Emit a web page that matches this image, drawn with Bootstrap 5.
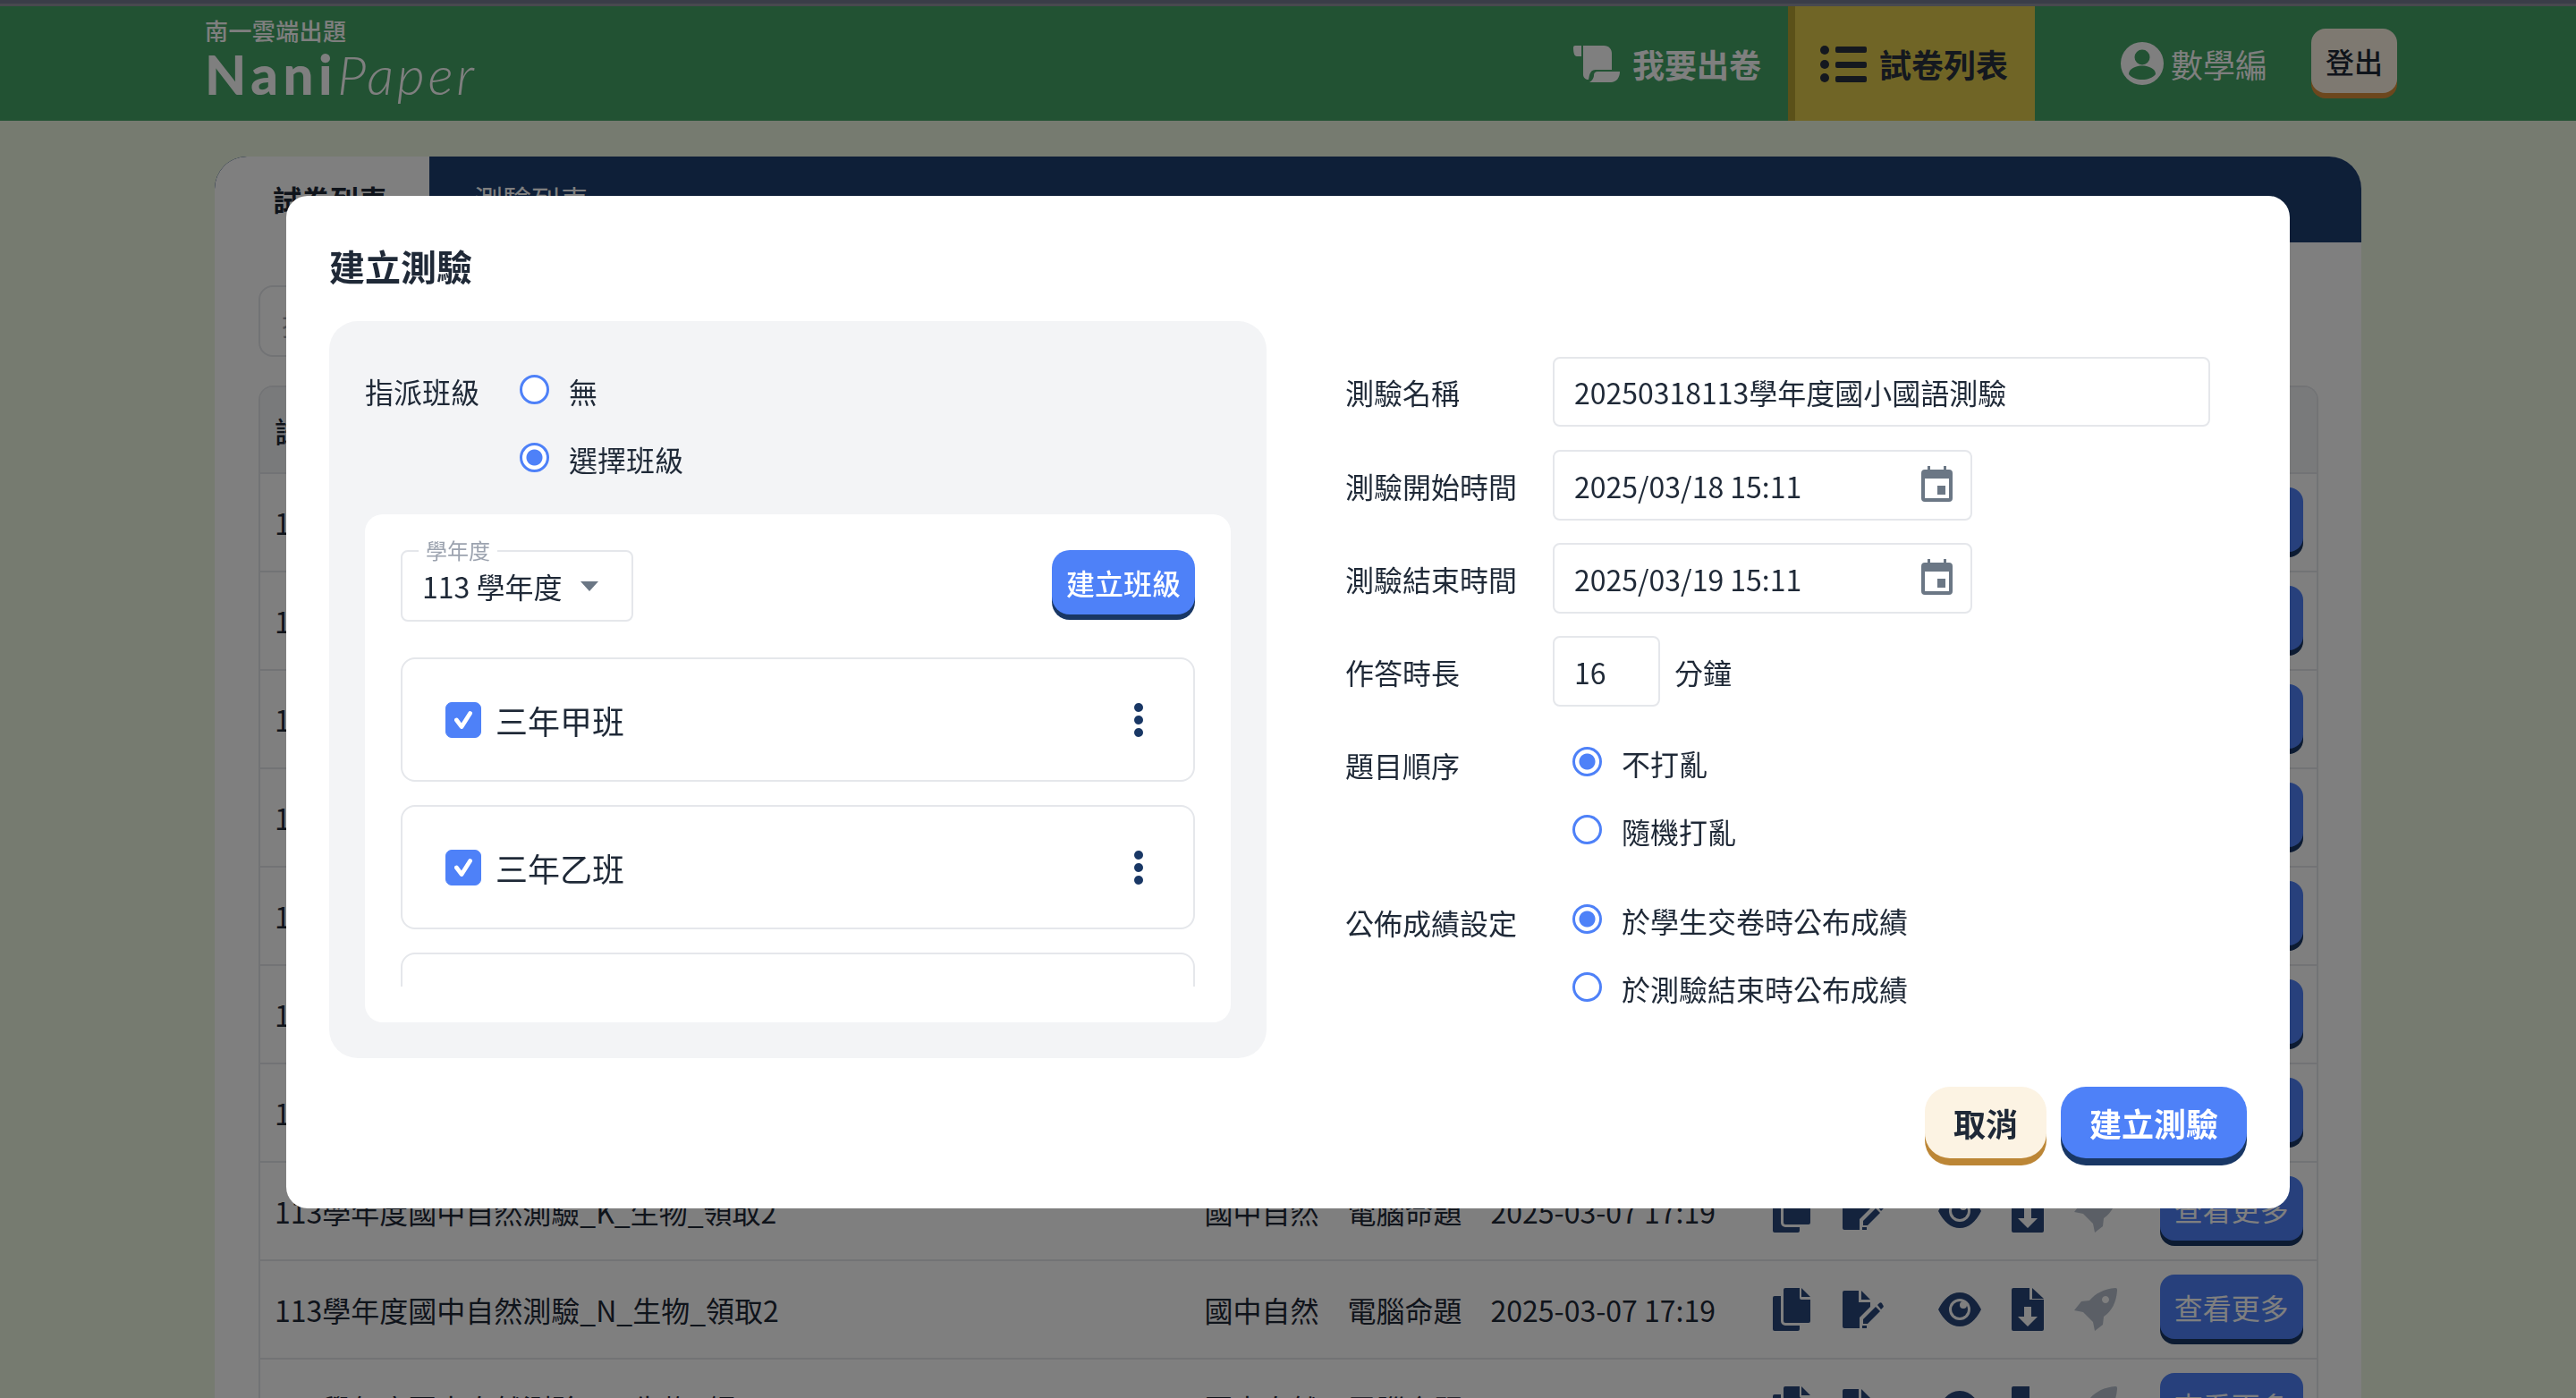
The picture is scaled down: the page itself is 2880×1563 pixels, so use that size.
<!DOCTYPE html>
<html lang="zh-Hant">
<head>
<meta charset="utf-8">
<title>NaniPaper</title>
<link href="https://cdn.jsdelivr.net/npm/bootstrap@5.3.0/dist/css/bootstrap.min.css" rel="stylesheet">
<style>
html,body{height:100%}
body{font-family:"Noto Sans CJK TC","Noto Sans",sans-serif;font-size:32px;color:#1f2937;background:#ecf6e0;line-height:1.5}
.top-strip{height:7px;background:#747a90;border-bottom:3px solid #90929e}
.app-nav{height:128px;background:#44a466;padding:0 200px 0 229px;flex-wrap:nowrap}
.logo-sub{font-size:26px;font-weight:500;color:#fff;letter-spacing:.4px;line-height:24px;margin-top:-6px}
.logo-main{font-family:Lato,sans-serif;font-size:60px;color:#fff;line-height:62px;white-space:nowrap;margin-top:6px}
.logo-main b{font-weight:900;letter-spacing:5.5px}
.logo-main i{font-weight:300;letter-spacing:3.6px}
.nav-item-a{display:flex;align-items:center;height:128px;font-size:36px;font-weight:700;color:#fff;text-decoration:none;gap:14px}
.nav-item-a svg{display:block}
.item-write{padding-right:30px}
.item-list{background:#e0ca4c;border-left:8px solid #b6a233;padding:0 30px 0 28px;color:#29303e}
.item-user{margin-left:96px;gap:8px;font-weight:400}
.logout{width:96px;height:72px;margin:0 0 6px 49px;padding:0;background:#fcf3e3;color:#1f2937;border:0;border-radius:16px;font-size:32px;font-weight:500;box-shadow:0 6px 0 #d98f3a}
.paper-card{margin:40px 240px 0;background:#fff;border-radius:36px 36px 0 0;overflow:hidden}
.tab-row{height:96px;background:#1c3e70}
.tab-a{width:240px;padding:23px 0 0 65px;background:#fff;font-weight:700;color:#1f2937;border-radius:36px 0 0 0}
.tab-b{padding:23px 0 0 50px;color:#fff}
.paper-body{padding:48px 48px 0 49px}
.search-box{width:800px;height:80px;border:2px solid #e5e7eb;border-radius:16px;padding:16px 24px;margin-bottom:32px;color:#9ca3af}
.table-wrap{border:2px solid #e5e7eb;border-bottom:0;border-radius:16px 16px 0 0;overflow:hidden}
.paper-table{table-layout:fixed;margin:0;width:100%;--bs-table-color:#1f2937}
.paper-table th{height:96px;background:#f3f4f6;font-weight:500;padding:0 0 0 16px;vertical-align:middle;border-bottom:2px solid #e5e7eb}
.paper-table td{height:110px;padding:0 0 0 18px;vertical-align:middle;border-bottom:2px solid #e5e7eb;white-space:nowrap}
.paper-table td:first-child{padding-left:16px}
.w-a{width:1037px}.w-b{width:160px}.w-c{width:160px}.w-d{width:316px}.w-e{width:625px}
.tool-set{display:flex;align-items:center;gap:28px;margin-left:-4px;color:#28467a}
.tool-set svg{display:block;flex:none}
.gap-x{margin-left:3px}.gap-y{margin-left:33px}
.tool-off{color:#b6bfcc}
.more-btn{display:block;width:160px;height:72px;padding:0;margin:-6px 0 0 48px;background:#4e81f8;color:#fff;border:0;border-radius:16px;font-size:32px;box-shadow:0 6px 0 #193765}
.more-push{margin-left:432px}
.dialog-box{max-width:2240px;width:2240px;margin:219px auto 0}
.dialog-box .modal-content{border:0;border-radius:24px;height:1132px;padding:0 48px 48px;display:block;color:#1f2937}
.dlg-title{font-size:40px;font-weight:700;height:140px;padding-top:48px;line-height:60px;margin:0}
.left-panel{width:1048px;height:824px;background:#f3f4f6;border-radius:32px;padding:40px}
.assign-row{height:76px}
.assign-row .rad,.rad-line .rad{margin-top:-3px}
.assign-label{width:173px}
.white-box{height:568px;margin-top:24px;background:#fff;border-radius:20px;padding:40px}
.year-sel{position:relative;width:260px;height:80px;border:2px solid #e5e7eb;border-radius:8px;padding:0 22px;font-size:32px}
.year-label{position:absolute;top:-14px;left:18px;background:#fff;padding:0 8px;font-size:24px;line-height:24px;color:#9ca3af}
.caret-mark{width:0;height:0;border:10px solid transparent;border-top:11px solid #6b7785;border-bottom:0;margin-left:auto;margin-right:15px}
.class-btn{width:160px;height:72px;padding:0;background:#4e81f8;color:#fff;border:0;border-radius:20px;font-size:32px;font-weight:500;box-shadow:0 6px 0 #193765;margin-bottom:6px}
.class-list{height:368px;margin-top:40px;overflow:hidden}
.class-item{height:139px;margin-bottom:26px;border:2px solid #e5e7eb;border-radius:16px;padding:0 56px 0 48px;font-size:36px}
.form-check-input.chk{width:40px;height:40px;margin:0 16px 0 0;border-radius:7px;background-color:#4e81f8;border-color:#4e81f8;flex:none}
.form-check-input.chk:checked{--bs-form-check-bg-image:url("data:image/svg+xml,%3csvg xmlns='http://www.w3.org/2000/svg' viewBox='0 0 20 20'%3e%3cpath fill='none' stroke='%23fff' stroke-linecap='round' stroke-linejoin='round' stroke-width='2.5' d='M6 10l3 4 5-8'/%3e%3c/svg%3e")}
.form-check-input.rad{width:33px;height:33px;margin-bottom:0;margin-right:0;margin-left:0;border:3px solid #4e81f8;background-color:#fff;flex:none}
.form-check-input.rad:checked{background-color:#fff;background-image:radial-gradient(circle,#4e81f8 0 8.5px,#fff 9.5px)}
.rad-text{margin-left:22px}
.dots-mark{display:flex;flex-direction:column;gap:4px;margin-left:auto}
.dots-mark span{width:10px;height:10px;border-radius:50%;background:#193765}
.right-panel{width:968px;margin-left:88px;padding-top:40px}
.form-line{margin-bottom:25px}
.form-line-first{margin-bottom:26px}
.form-name{width:232px;flex:none}
.paper-input{height:79px;font-size:32px;color:#1f2937;border:2px solid #e5e7eb;border-radius:8px;padding:0 22px;box-shadow:none}
.w-full{width:735px;height:78px}.w-num{width:120px}
.time-box{display:flex;align-items:center;height:79px;width:469px;border:2px solid #e5e7eb;border-radius:8px;padding:0 20px 0 22px}
.time-box span{flex:1}
.time-box svg{margin-top:-4px}
.unit-text{margin-left:16px}
.rad-line{height:76px;padding-left:22px}
.rad-text-b{margin-left:22px}
.foot-row{margin-top:32px;gap:16px}
.foot-btn{height:80px;padding:0;border:0;border-radius:28px;font-size:36px;font-weight:700;margin-bottom:8px}
.foot-cancel{width:136px;background:#fcf3e3;color:#1f2937;box-shadow:0 8px 0 #bc8636}
.foot-create{width:208px;background:#4e81f8;color:#fff;box-shadow:0 8px 0 #193765}
</style>
</head>
<body class="overflow-hidden">
<div class="top-strip"></div>
<nav class="navbar app-nav">
  <div>
    <div class="logo-sub">南一雲端出題</div>
    <div class="logo-main"><b>Nani</b><i>Paper</i></div>
  </div>
  <div class="d-flex align-items-center ms-auto">
    <a class="nav-item-a item-write" href="#">
      <svg width="52" height="41" viewBox="0 0 52 41" fill="#fff"><path d="M0 2a2 2 0 0 1 2-2H9V12H4C1 12 0 8 0 2z"/><path d="M11 0H34C40 0 43 4 43 9V27H26C20 27 19 30 18 33L17 38C14 38 11 36 11 32z"/><path d="M27 29H52C52 36 48 41 42 41H18C22 39 23 35 23 33C23 30 25 29 27 29z"/></svg>
      我要出卷</a>
    <a class="nav-item-a item-list" href="#">
      <svg width="52" height="41" viewBox="0 0 52 41" fill="#29303e"><circle cx="5" cy="5" r="5"/><circle cx="5" cy="21" r="5"/><circle cx="5" cy="36" r="5"/><rect x="17" y="1" width="35" height="7" rx="2"/><rect x="17" y="18" width="35" height="7" rx="2"/><rect x="17" y="34" width="35" height="7" rx="2"/></svg>
      試卷列表</a>
    <a class="nav-item-a item-user" href="#">
      <svg width="48" height="48" viewBox="0 0 48 48"><circle cx="24" cy="24" r="24" fill="#fff"/><circle cx="24" cy="17" r="8.5" fill="#44a466"/><path d="M9 36c0-7 9-9.500 15-9.500S39 29 39 36c-3.500 4-9 6-15 6s-11.500-2-15-6z" fill="#44a466"/></svg>
      數學編</a>
    <button class="logout" type="button">登出</button>
  </div>
</nav>

<div class="paper-card">
  <div class="tab-row d-flex">
    <div class="tab-a">試卷列表</div>
    <div class="tab-b">測驗列表</div>
  </div>
  <div class="paper-body">
    <div class="search-box">搜尋試卷名稱</div>
    <div class="table-wrap">
      <table class="table paper-table">
        <thead><tr><th class="w-a">試卷名稱</th><th class="w-b">科目</th><th class="w-c">類型</th><th class="w-d">建立時間</th><th class="w-e">操作</th></tr></thead>
        <tbody>
          <tr><td>113學年度國中自然測驗_A_生物_領取2</td><td>國中自然</td><td>電腦命題</td><td>2025-03-07 17:19</td><td><div class="d-flex align-items-center"><button class="more-btn more-push" type="button">查看更多</button></div></td></tr>
          <tr><td>113學年度國中自然測驗_B_生物_領取2</td><td>國中自然</td><td>電腦命題</td><td>2025-03-07 17:19</td><td><div class="d-flex align-items-center"><button class="more-btn more-push" type="button">查看更多</button></div></td></tr>
          <tr><td>113學年度國中自然測驗_C_生物_領取2</td><td>國中自然</td><td>電腦命題</td><td>2025-03-07 17:19</td><td><div class="d-flex align-items-center"><button class="more-btn more-push" type="button">查看更多</button></div></td></tr>
          <tr><td>113學年度國中自然測驗_D_生物_領取2</td><td>國中自然</td><td>電腦命題</td><td>2025-03-07 17:19</td><td><div class="d-flex align-items-center"><button class="more-btn more-push" type="button">查看更多</button></div></td></tr>
          <tr><td>113學年度國中自然測驗_E_生物_領取2</td><td>國中自然</td><td>電腦命題</td><td>2025-03-07 17:19</td><td><div class="d-flex align-items-center"><button class="more-btn more-push" type="button">查看更多</button></div></td></tr>
          <tr><td>113學年度國中自然測驗_F_生物_領取2</td><td>國中自然</td><td>電腦命題</td><td>2025-03-07 17:19</td><td><div class="d-flex align-items-center"><button class="more-btn more-push" type="button">查看更多</button></div></td></tr>
          <tr><td>113學年度國中自然測驗_G_生物_領取2</td><td>國中自然</td><td>電腦命題</td><td>2025-03-07 17:19</td><td><div class="d-flex align-items-center"><button class="more-btn more-push" type="button">查看更多</button></div></td></tr>
          <tr><td>113學年度國中自然測驗_K_生物_領取2</td><td>國中自然</td><td>電腦命題</td><td>2025-03-07 17:19</td><td>
            <div class="d-flex align-items-center">
              <div class="tool-set">
                <svg width="48" height="48" viewBox="0 0 48 48" fill="currentColor"><path d="M17 0H33V11a2 2 0 0 0 2 2H45V37a2 2 0 0 1-2 2H17a2 2 0 0 1-2-2V2a2 2 0 0 1 2-2z"/><path d="M35 0L45 10H35z"/><path d="M12 9V37a5 5 0 0 0 5 5H33V46a2 2 0 0 1-2 2H5a2 2 0 0 1-2-2V11a2 2 0 0 1 2-2z"/></svg>
                <svg class="gap-x" width="48" height="48" viewBox="0 0 48 48" fill="currentColor"><path d="M4 3H20V16H33V21L21 33V45H4a2 2 0 0 1-2-2V5a2 2 0 0 1 2-2z"/><path d="M23 3L33 13H23z"/><path d="M25 35L39 21L44 26L30 40H25z"/><path d="M41 19L43 17a2 2 0 0 1 3 0L47 19a2 2 0 0 1 0 3L45 24z"/><path d="M24 45H29V42H24z"/></svg>
                <svg class="gap-y" width="48" height="48" viewBox="0 0 48 48" fill="currentColor"><path d="M0 24C6 12 14 5 24 5S42 12 48 24C42 36 34 43 24 43S6 36 0 24z"/><circle cx="24" cy="24" r="12" fill="#fff"/><circle cx="24" cy="24" r="9"/><circle cx="28" cy="19" r="4" fill="#fff"/></svg>
                <svg width="48" height="48" viewBox="0 0 48 48" fill="currentColor"><path d="M8 0H26V13H42V46a2 2 0 0 1-2 2H8a2 2 0 0 1-2-2V2a2 2 0 0 1 2-2z"/><path d="M29 0L42 12H29z"/><path d="M20 21H28V32H35L24 43L13 32H20z" fill="#fff"/></svg>
                <svg class="tool-off" width="48" height="48" viewBox="0 0 48 48" fill="currentColor"><path fill-rule="evenodd" d="M46 0C48 0 48 1 48 3C47 16 42 26 33 32L32 41L23 48L21 38L10 27L0 25L8 15L17 14C24 6 33 1 46 0zM35 9a4 4 0 1 0 .01 0z"/></svg>
              </div>
              <button class="more-btn" type="button">查看更多</button>
            </div></td></tr>
          <tr><td>113學年度國中自然測驗_N_生物_領取2</td><td>國中自然</td><td>電腦命題</td><td>2025-03-07 17:19</td><td>
            <div class="d-flex align-items-center">
              <div class="tool-set">
                <svg width="48" height="48" viewBox="0 0 48 48" fill="currentColor"><path d="M17 0H33V11a2 2 0 0 0 2 2H45V37a2 2 0 0 1-2 2H17a2 2 0 0 1-2-2V2a2 2 0 0 1 2-2z"/><path d="M35 0L45 10H35z"/><path d="M12 9V37a5 5 0 0 0 5 5H33V46a2 2 0 0 1-2 2H5a2 2 0 0 1-2-2V11a2 2 0 0 1 2-2z"/></svg>
                <svg class="gap-x" width="48" height="48" viewBox="0 0 48 48" fill="currentColor"><path d="M4 3H20V16H33V21L21 33V45H4a2 2 0 0 1-2-2V5a2 2 0 0 1 2-2z"/><path d="M23 3L33 13H23z"/><path d="M25 35L39 21L44 26L30 40H25z"/><path d="M41 19L43 17a2 2 0 0 1 3 0L47 19a2 2 0 0 1 0 3L45 24z"/><path d="M24 45H29V42H24z"/></svg>
                <svg class="gap-y" width="48" height="48" viewBox="0 0 48 48" fill="currentColor"><path d="M0 24C6 12 14 5 24 5S42 12 48 24C42 36 34 43 24 43S6 36 0 24z"/><circle cx="24" cy="24" r="12" fill="#fff"/><circle cx="24" cy="24" r="9"/><circle cx="28" cy="19" r="4" fill="#fff"/></svg>
                <svg width="48" height="48" viewBox="0 0 48 48" fill="currentColor"><path d="M8 0H26V13H42V46a2 2 0 0 1-2 2H8a2 2 0 0 1-2-2V2a2 2 0 0 1 2-2z"/><path d="M29 0L42 12H29z"/><path d="M20 21H28V32H35L24 43L13 32H20z" fill="#fff"/></svg>
                <svg class="tool-off" width="48" height="48" viewBox="0 0 48 48" fill="currentColor"><path fill-rule="evenodd" d="M46 0C48 0 48 1 48 3C47 16 42 26 33 32L32 41L23 48L21 38L10 27L0 25L8 15L17 14C24 6 33 1 46 0zM35 9a4 4 0 1 0 .01 0z"/></svg>
              </div>
              <button class="more-btn" type="button">查看更多</button>
            </div></td></tr>
          <tr><td>113學年度國中自然測驗_O_生物_領取2</td><td>國中自然</td><td>電腦命題</td><td>2025-03-07 17:19</td><td>
            <div class="d-flex align-items-center">
              <div class="tool-set">
                <svg width="48" height="48" viewBox="0 0 48 48" fill="currentColor"><path d="M17 0H33V11a2 2 0 0 0 2 2H45V37a2 2 0 0 1-2 2H17a2 2 0 0 1-2-2V2a2 2 0 0 1 2-2z"/><path d="M35 0L45 10H35z"/><path d="M12 9V37a5 5 0 0 0 5 5H33V46a2 2 0 0 1-2 2H5a2 2 0 0 1-2-2V11a2 2 0 0 1 2-2z"/></svg>
                <svg class="gap-x" width="48" height="48" viewBox="0 0 48 48" fill="currentColor"><path d="M4 3H20V16H33V21L21 33V45H4a2 2 0 0 1-2-2V5a2 2 0 0 1 2-2z"/><path d="M23 3L33 13H23z"/></svg>
                <svg class="gap-y" width="48" height="48" viewBox="0 0 48 48" fill="currentColor"><path d="M0 24C6 12 14 5 24 5S42 12 48 24C42 36 34 43 24 43S6 36 0 24z"/></svg>
                <svg width="48" height="48" viewBox="0 0 48 48" fill="currentColor"><path d="M8 0H26V13H42V46a2 2 0 0 1-2 2H8a2 2 0 0 1-2-2V2a2 2 0 0 1 2-2z"/></svg>
                <svg class="tool-off" width="48" height="48" viewBox="0 0 48 48" fill="currentColor"><path d="M46 0C48 0 48 1 48 3C47 16 42 26 33 32L32 41L23 48L21 38L10 27L0 25L8 15L17 14C24 6 33 1 46 0z"/></svg>
              </div>
              <button class="more-btn" type="button">查看更多</button>
            </div></td></tr>
        </tbody>
      </table>
    </div>
  </div>
</div>

<div class="modal-backdrop show"></div>
<div class="modal d-block" role="dialog" aria-modal="true">
  <div class="modal-dialog dialog-box">
    <div class="modal-content">
      <h5 class="dlg-title">建立測驗</h5>
      <div class="d-flex">
        <div class="left-panel">
          <div class="d-flex align-items-center assign-row">
            <div class="assign-label">指派班級</div>
            <input class="form-check-input rad" type="radio" name="assign">
            <span class="rad-text">無</span>
          </div>
          <div class="d-flex align-items-center assign-row">
            <div class="assign-label"></div>
            <input class="form-check-input rad" type="radio" name="assign" checked>
            <span class="rad-text">選擇班級</span>
          </div>
          <div class="white-box">
            <div class="d-flex justify-content-between align-items-start">
              <div class="year-sel d-flex align-items-center">
                <span class="year-label">學年度</span>
                <span>113 學年度</span>
                <span class="caret-mark"></span>
              </div>
              <button class="class-btn" type="button">建立班級</button>
            </div>
            <div class="class-list">
              <div class="class-item d-flex align-items-center">
                <input class="form-check-input chk" type="checkbox" checked>
                <span>三年甲班</span>
                <span class="dots-mark"><span></span><span></span><span></span></span>
              </div>
              <div class="class-item d-flex align-items-center">
                <input class="form-check-input chk" type="checkbox" checked>
                <span>三年乙班</span>
                <span class="dots-mark"><span></span><span></span><span></span></span>
              </div>
              <div class="class-item d-flex align-items-center">
                <input class="form-check-input chk" type="checkbox">
                <span>三年丙班</span>
                <span class="dots-mark"><span></span><span></span><span></span></span>
              </div>
            </div>
          </div>
        </div>
        <div class="right-panel">
          <div class="d-flex align-items-center form-line-first">
            <div class="form-name">測驗名稱</div>
            <input class="form-control paper-input w-full" type="text" value="20250318113學年度國小國語測驗">
          </div>
          <div class="d-flex align-items-center form-line">
            <div class="form-name">測驗開始時間</div>
            <div class="time-box"><span>2025/03/18 15:11</span>
              <svg width="35" height="40" viewBox="0 0 35 40" fill="#6b7785"><path fill-rule="evenodd" d="M7 0h3v4h15V0h3v4h3a4 4 0 0 1 4 4v28a4 4 0 0 1-4 4H4a4 4 0 0 1-4-4V8a4 4 0 0 1 4-4h3zM4 14v22h27V14z"/><rect x="18" y="22" width="9" height="10"/></svg>
            </div>
          </div>
          <div class="d-flex align-items-center form-line">
            <div class="form-name">測驗結束時間</div>
            <div class="time-box"><span>2025/03/19 15:11</span>
              <svg width="35" height="40" viewBox="0 0 35 40" fill="#6b7785"><path fill-rule="evenodd" d="M7 0h3v4h15V0h3v4h3a4 4 0 0 1 4 4v28a4 4 0 0 1-4 4H4a4 4 0 0 1-4-4V8a4 4 0 0 1 4-4h3zM4 14v22h27V14z"/><rect x="18" y="22" width="9" height="10"/></svg>
            </div>
          </div>
          <div class="d-flex align-items-center form-line">
            <div class="form-name">作答時長</div>
            <input class="form-control paper-input w-num" type="text" value="16">
            <span class="unit-text">分鐘</span>
          </div>
          <div class="d-flex">
            <div class="form-name pt-3">題目順序</div>
            <div>
              <div class="d-flex align-items-center rad-line"><input class="form-check-input rad" type="radio" name="order" checked><span class="rad-text-b">不打亂</span></div>
              <div class="d-flex align-items-center rad-line"><input class="form-check-input rad" type="radio" name="order"><span class="rad-text-b">隨機打亂</span></div>
            </div>
          </div>
          <div class="d-flex mt-4">
            <div class="form-name pt-3">公佈成績設定</div>
            <div>
              <div class="d-flex align-items-center rad-line"><input class="form-check-input rad" type="radio" name="score" checked><span class="rad-text-b">於學生交卷時公布成績</span></div>
              <div class="d-flex align-items-center rad-line"><input class="form-check-input rad" type="radio" name="score"><span class="rad-text-b">於測驗結束時公布成績</span></div>
            </div>
          </div>
        </div>
      </div>
      <div class="d-flex justify-content-end foot-row">
        <button class="foot-btn foot-cancel" type="button">取消</button>
        <button class="foot-btn foot-create" type="button">建立測驗</button>
      </div>
    </div>
  </div>
</div>
<script src="https://cdn.jsdelivr.net/npm/bootstrap@5.3.0/dist/js/bootstrap.bundle.min.js"></script>
</body>
</html>
